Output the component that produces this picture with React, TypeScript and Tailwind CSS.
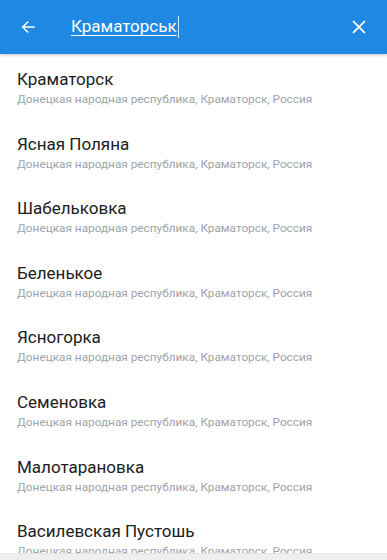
import React from 'react';

const places = [
  'Краматорск',
  'Ясная Поляна',
  'Шабельковка',
  'Беленькое',
  'Ясногорка',
  'Семеновка',
  'Малотарановка',
  'Василевская Пустошь',
];

const region = 'Донецкая народная республика, Краматорск, Россия';

const BackArrow: React.FC = () => (
  <svg width="18" height="18" viewBox="0 0 24 24" fill="none" stroke="white" strokeWidth="2" strokeLinecap="square">
    <path d="M20 12H5" />
    <path d="M11.5 5.5L5 12l6.5 6.5" />
  </svg>
);

const CloseIcon: React.FC = () => (
  <svg width="16" height="16" viewBox="0 0 24 24" fill="none" stroke="white" strokeWidth="2.6" strokeLinecap="square">
    <path d="M4 4l16 16M20 4L4 20" />
  </svg>
);

const App: React.FC = () => {
  return (
    <div className="w-[387px] h-[560px] bg-white overflow-hidden flex flex-col font-['Roboto','Noto_Sans',sans-serif]">
      <header className="h-[54px] shrink-0 bg-[#1f88e3] flex items-center shadow-[0_1px_3px_rgba(0,0,0,0.25)] z-10">
        <div className="w-[56px] flex justify-center">
          <BackArrow />
        </div>
        <div className="flex-1 flex items-center pl-[15px]">
          <span className="text-white text-[17px] underline underline-offset-[3px] decoration-1">Краматорськ</span>
          <span className="w-px h-[22px] bg-white/80 ml-px" />
        </div>
        <div className="w-[56px] flex justify-center">
          <CloseIcon />
        </div>
      </header>
      <ul className="flex-1 overflow-hidden">
        {places.map((name) => (
          <li key={name} className="h-[64.6px] px-[17px] pt-[14px]">
            <div className="text-[17px] leading-[22px] text-[#202020]">{name}</div>
            <div className="text-[11.8px] leading-[18px] text-[#9da4ab]">{region}</div>
          </li>
        ))}
      </ul>
      <div className="h-[7px] shrink-0 bg-[#efefef] border-t border-[#e4e4e4]" />
    </div>
  );
};

export default App;
